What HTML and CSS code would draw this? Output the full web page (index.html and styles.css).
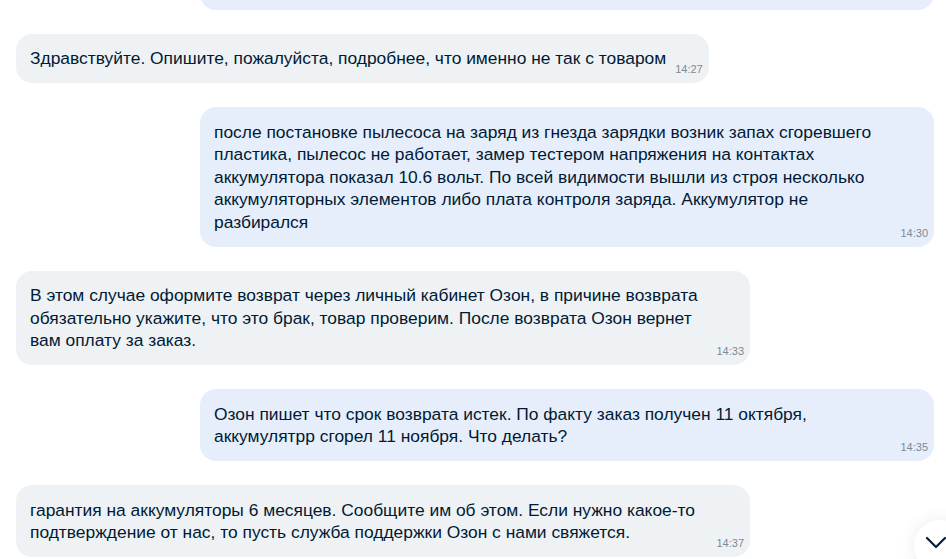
FILE: index.html
```html
<!DOCTYPE html>
<html lang="ru">
<head>
<meta charset="utf-8">
<title>Чат</title>
<link rel="stylesheet" href="styles.css">
</head>
<body>
<div class="chat">
  <div class="msg out"><div class="bubble full">Пришёл аккумулятор для пылесоса, после первой зарядки перестал работать<span class="time">14:25</span></div></div>
  <div class="msg in"><div class="bubble">Здравствуйте. Опишите, пожалуйста, подробнее, что именно не так с товаром<span class="time">14:27</span></div></div>
  <div class="msg out"><div class="bubble full">после постановке пылесоса на заряд из гнезда зарядки возник запах сгоревшего пластика, пылесос не работает, замер тестером напряжения на контактах аккумулятора показал 10.6 вольт. По всей видимости вышли из строя несколько аккумуляторных элементов либо плата контроля заряда. Аккумулятор не разбирался<span class="time">14:30</span></div></div>
  <div class="msg in"><div class="bubble full">В этом случае оформите возврат через личный кабинет Озон, в причине возврата обязательно укажите, что это брак, товар проверим. После возврата Озон вернет вам оплату за заказ.<span class="time">14:33</span></div></div>
  <div class="msg out"><div class="bubble full">Озон пишет что срок возврата истек. По факту заказ получен 11 октября, аккумулятрр сгорел 11 ноября. Что делать?<span class="time">14:35</span></div></div>
  <div class="msg in"><div class="bubble full">гарантия на аккумуляторы 6 месяцев. Сообщите им об этом. Если нужно какое-то подтверждение от нас, то пусть служба поддержки Озон с нами свяжется.<span class="time">14:37</span></div></div>
</div>
<button class="down" aria-label="Вниз">
  <svg width="22" height="14" viewBox="0 0 22 14"><path d="M2 2 L11 11 L20 2" fill="none" stroke="#0b1f35" stroke-width="2.2" stroke-linecap="round" stroke-linejoin="round"/></svg>
</button>
</body>
</html>
```
FILE: styles.css
```css
html, body {
  margin: 0;
  padding: 0;
  background: #fff;
  width: 946px;
  height: 559px;
  overflow: hidden;
}
body {
  font-family: "Liberation Sans", Arial, sans-serif;
  color: #001a34;
  position: relative;
}
.chat {
  height: 559px;
  box-sizing: border-box;
  display: flex;
  flex-direction: column;
  justify-content: flex-end;
  gap: 24px;
  padding: 0 12px 2px 16px;
  overflow: hidden;
}
.msg {
  display: flex;
  flex-shrink: 0;
}
.msg.in { justify-content: flex-start; }
.msg.out { justify-content: flex-end; }
.bubble {
  display: flow-root;
  max-width: 734px;
  box-sizing: border-box;
  padding: 13.5px 6px 7px 14px;
  border-radius: 16px;
  font-size: 17.4px;
  line-height: 22.5px;
}
.bubble.full {
  width: 734px;
  padding-right: 50px;
}
.bubble.full .time { margin-right: -44px; }
.in .bubble { background: #eff2f5; }
.out .bubble { background: #e6eefc; }
.time {
  float: right;
  margin: 15px 0 0 9px;
  font-size: 11px;
  line-height: 14px;
  color: #7d8994;
}
.down {
  position: absolute;
  left: 914px;
  top: 520px;
  width: 52px;
  height: 52px;
  border-radius: 50%;
  border: none;
  background: #fff;
  box-shadow: 0 0 18px rgba(0, 26, 52, 0.08);
  padding: 0 8px 6px 0;
  display: flex;
  align-items: center;
  justify-content: center;
}
.down svg { display: block; }
```
